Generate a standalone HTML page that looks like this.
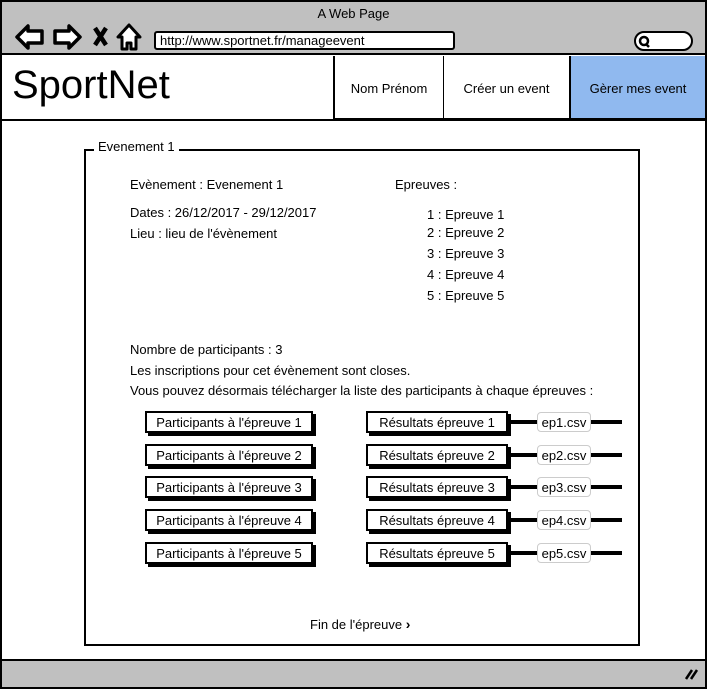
<!DOCTYPE html>
<html><head><meta charset="utf-8"><style>
*{margin:0;padding:0;box-sizing:border-box}
body{width:707px;height:689px;position:relative;overflow:hidden;background:#fff;font-family:"Liberation Sans",sans-serif;font-size:13px;color:#000}
.a{position:absolute}
.t{position:absolute;white-space:nowrap}
.btn{position:absolute;height:22px;border:2px solid #000;background:#fff;box-shadow:3px 3px 0 #000;text-align:center;line-height:19px;font-size:13px}
.csv{position:absolute;width:54px;height:20px;border:1px solid #ccc;border-radius:4px;background:#fff;text-align:center;line-height:19px;font-size:13px}
.ln{position:absolute;height:4px;background:#000}
</style></head><body>
<div class="a" style="left:0;top:0;width:707px;height:689px;border:2px solid #000"></div>
<div class="a" style="left:2px;top:2px;width:703px;height:53px;background:#c0c0c0;border-bottom:2px solid #000"></div>
<div class="t" style="left:0;width:707px;text-align:center;top:6px;font-size:13px">A Web Page</div>
<svg class="a" style="left:14px;top:22px" width="132" height="30" viewBox="0 0 132 30">
<path d="M3 15 L14 4 L14 9 L28 9 L28 21 L14 21 L14 26 Z" fill="#fff" stroke="#000" stroke-width="3.5" stroke-linejoin="round"/>
<path d="M66 15 L55 4 L55 9 L41 9 L41 21 L55 21 L55 26 Z" fill="#fff" stroke="#000" stroke-width="3.5" stroke-linejoin="round"/>
<path d="M81 6 L92 23 M92 6 L81 23" stroke="#000" stroke-width="4.5"/>
<path d="M115 3 L104 15 L108 15 L108 27 L113 27 L113 21 L117 21 L117 27 L122 27 L122 15 L126 15 Z" fill="#fff" stroke="#000" stroke-width="3" stroke-linejoin="round"/>
</svg>
<div class="a" style="left:154px;top:31px;width:301px;height:19px;background:#fff;border:2px solid #000;border-radius:3px"></div>
<div class="t" style="left:160px;top:33px;font-size:13px">http://www.sportnet.fr/manageevent</div>
<div class="a" style="left:634px;top:31px;width:59px;height:20px;background:#fff;border:2px solid #000;border-radius:10px"></div>
<svg class="a" style="left:637px;top:35px" width="16" height="14"><circle cx="7" cy="6" r="4" fill="none" stroke="#000" stroke-width="2.5"/><path d="M9 9 L12 12" stroke="#000" stroke-width="2.5"/></svg>
<div class="t" style="left:12px;top:63px;font-size:40px">SportNet</div>
<div class="a" style="left:2px;top:119px;width:703px;height:2px;background:#000"></div>
<div class="a" style="left:333px;top:56px;width:111px;height:64px;border-left:2px solid #000;border-right:1px solid #000;border-bottom:2px solid #000;text-align:center;line-height:66px">Nom Prénom</div>
<div class="a" style="left:444px;top:56px;width:125px;height:64px;border-bottom:2px solid #000;text-align:center;line-height:66px">Créer un event</div>
<div class="a" style="left:569px;top:56px;width:136px;height:64px;background:#90b9ef;border-left:2px solid #000;border-bottom:2px solid #000;text-align:center;line-height:66px">Gèrer mes event</div>
<div class="a" style="left:84px;top:149px;width:556px;height:497px;border:2px solid #000"></div>
<div class="t" style="left:94px;top:139px;background:#fff;padding:0 4px">Evenement 1</div>
<div class="t" style="left:130px;top:177px">Evènement : Evenement 1</div>
<div class="t" style="left:130px;top:205px">Dates : 26/12/2017 - 29/12/2017</div>
<div class="t" style="left:130px;top:226px">Lieu : lieu de l'évènement</div>
<div class="t" style="left:395px;top:177px">Epreuves :</div>
<div class="t" style="left:427px;top:207px">1 : Epreuve 1</div>
<div class="t" style="left:427px;top:225px">2 : Epreuve 2</div>
<div class="t" style="left:427px;top:246px">3 : Epreuve 3</div>
<div class="t" style="left:427px;top:267px">4 : Epreuve 4</div>
<div class="t" style="left:427px;top:288px">5 : Epreuve 5</div>
<div class="t" style="left:130px;top:342px">Nombre de participants : 3</div>
<div class="t" style="left:130px;top:363px">Les inscriptions pour cet évènement sont closes.</div>
<div class="t" style="left:130px;top:383px">Vous pouvez désormais télécharger la liste des participants à chaque épreuves :</div>

<div class="btn" style="left:145px;top:411px;width:168px">Participants à l'épreuve 1</div>
<div class="btn" style="left:145px;top:444px;width:168px">Participants à l'épreuve 2</div>
<div class="btn" style="left:145px;top:476px;width:168px">Participants à l'épreuve 3</div>
<div class="btn" style="left:145px;top:509px;width:168px">Participants à l'épreuve 4</div>
<div class="btn" style="left:145px;top:542px;width:168px">Participants à l'épreuve 5</div>

<div class="ln" style="left:505px;top:420px;width:117px"></div>
<div class="ln" style="left:505px;top:453px;width:117px"></div>
<div class="ln" style="left:505px;top:485px;width:117px"></div>
<div class="ln" style="left:505px;top:518px;width:117px"></div>
<div class="ln" style="left:505px;top:551px;width:117px"></div>

<div class="btn" style="left:366px;top:411px;width:142px">Résultats épreuve 1</div>
<div class="btn" style="left:366px;top:444px;width:142px">Résultats épreuve 2</div>
<div class="btn" style="left:366px;top:476px;width:142px">Résultats épreuve 3</div>
<div class="btn" style="left:366px;top:509px;width:142px">Résultats épreuve 4</div>
<div class="btn" style="left:366px;top:542px;width:142px">Résultats épreuve 5</div>

<div class="csv" style="left:537px;top:412px">ep1.csv</div>
<div class="csv" style="left:537px;top:445px">ep2.csv</div>
<div class="csv" style="left:537px;top:477px">ep3.csv</div>
<div class="csv" style="left:537px;top:510px">ep4.csv</div>
<div class="csv" style="left:537px;top:543px">ep5.csv</div>

<div class="t" style="left:310px;top:616px">Fin de l'épreuve <b style="font-size:14px">›</b></div>
<div class="a" style="left:2px;top:659px;width:703px;height:28px;background:#c0c0c0;border-top:2px solid #000"></div>
<svg class="a" style="left:684px;top:667px" width="16" height="14"><path d="M2 12 L8 3 M7 12 L13 3" stroke="#000" stroke-width="2.5"/></svg>
</body></html>
